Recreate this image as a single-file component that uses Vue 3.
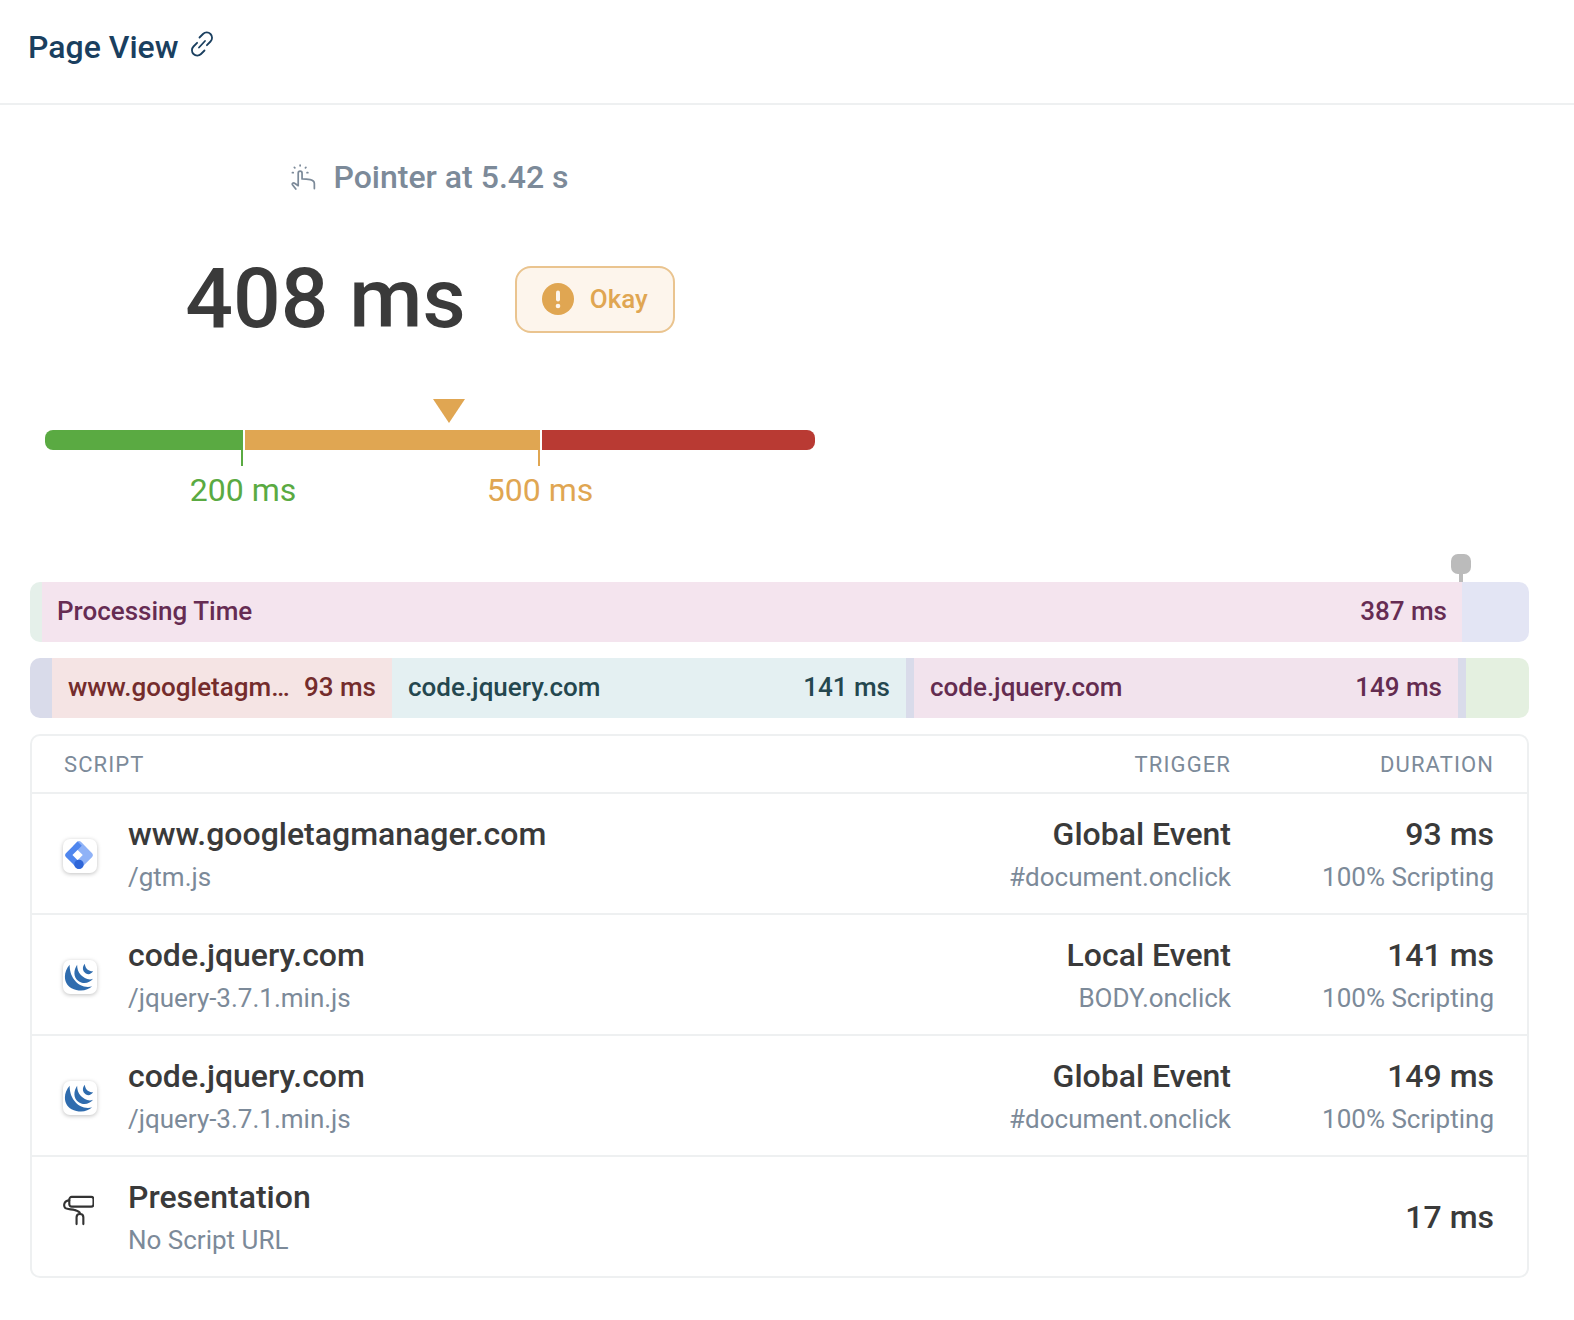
<script setup>
const topSegs = [
  { w: 12, bg: '#e5f0ea' },
  { w: 1420, bg: '#f4e4ee', label: 'Processing Time', value: '387 ms', color: '#662c53' },
  { w: 67, bg: '#e3e5f4' }
]
const subSegs = [
  { w: 22, bg: '#d9dbea' },
  { w: 340, bg: '#f5e4e4', label: 'www.googletagmanager.com', value: '93 ms', color: '#742c2c' },
  { w: 514, bg: '#e4f0f2', label: 'code.jquery.com', value: '141 ms', color: '#24474f' },
  { w: 8, bg: '#d9dbea' },
  { w: 544, bg: '#f2e3ed', label: 'code.jquery.com', value: '149 ms', color: '#642c50' },
  { w: 8, bg: '#d9dbea' },
  { w: 63, bg: '#e4f0e0' }
]
const rows = [
  { icon: 'gtm', name: 'www.googletagmanager.com', path: '/gtm.js', trigger: 'Global Event', source: '#document.onclick', time: '93 ms', note: '100% Scripting' },
  { icon: 'jq', name: 'code.jquery.com', path: '/jquery-3.7.1.min.js', trigger: 'Local Event', source: 'BODY.onclick', time: '141 ms', note: '100% Scripting' },
  { icon: 'jq', name: 'code.jquery.com', path: '/jquery-3.7.1.min.js', trigger: 'Global Event', source: '#document.onclick', time: '149 ms', note: '100% Scripting' },
  { icon: 'roller', name: 'Presentation', path: 'No Script URL', trigger: '', source: '', time: '17 ms', note: '' }
]
</script>

<template>
  <div class="page">
    <header class="head">
      <h1 class="title">Page View</h1>
      <svg class="link" viewBox="0 0 28 28" fill="none" stroke="#1a3f5f" stroke-width="1.8" stroke-linecap="round">
        <path d="M11.5 7.5 15 4a5.3 5.3 0 0 1 7.5 0 5.3 5.3 0 0 1 0 7.5l-3.6 3.7" />
        <path d="M16.5 20.5 13 24a5.3 5.3 0 0 1-7.500 0 5.300 5.300 0 0 1 0-7.500l3.600-3.700" />
        <path d="m11 17.500 6-6.500" />
      </svg>
    </header>

    <section class="summary">
      <div class="pointer">
        <svg class="hand" viewBox="0 0 26 28" fill="none" stroke="#7c8a99" stroke-width="1.800" stroke-linecap="round" stroke-linejoin="round">
          <path d="M5 26 1.500 21.500c-.6-1 .8-2.600 2.300-1.500L7.500 22.500V9.500c0-2.800 4-2.800 4 0V15.500c3 0 6 .3 8.500.8 3 .6 4.300 2 4.300 4.200v5" />
          <path d="M9.500 1.200v.6M3.500 3.500l.5.5M15.500 3.500l-.5.5M1.500 9h.8M16.700 9h.8" />
        </svg>
        <span>Pointer at 5.42 s</span>
      </div>

      <div class="score">
        <span class="big">408 ms</span>
        <span class="badge">
          <svg class="warn" viewBox="0 0 32 32">
            <circle cx="16" cy="16" r="16" fill="#e0a652" />
            <rect x="14" y="7.500" width="4" height="11" rx="2" fill="#fdf5ec" />
            <circle cx="16" cy="23" r="2.300" fill="#fdf5ec" />
          </svg>
          Okay
        </span>
      </div>

      <div class="meter">
        <i class="marker"></i>
        <div class="track">
          <b class="good"></b>
          <b class="okay"></b>
          <b class="poor"></b>
        </div>
        <div class="scale">
          <div class="stop stop-good"><u></u><span>200 ms</span></div>
          <div class="stop stop-okay"><u></u><span>500 ms</span></div>
        </div>
      </div>
    </section>

    <section class="timeline">
      <div class="pin"></div>
      <div class="bar">
        <div v-for="(s, i) in topSegs" :key="i" class="seg" :style="{ width: s.w + 'px', background: s.bg, color: s.color }">
          <template v-if="s.label">
            <span class="seg-label top-label">{{ s.label }}</span>
            <span class="seg-value top-value">{{ s.value }}</span>
          </template>
        </div>
      </div>
      <div class="bar">
        <div v-for="(s, i) in subSegs" :key="i" class="seg sub" :style="{ width: s.w + 'px', background: s.bg, color: s.color }">
          <template v-if="s.label">
            <span class="seg-label">{{ s.label }}</span>
            <span class="seg-value">{{ s.value }}</span>
          </template>
        </div>
      </div>
    </section>

    <section class="table">
      <div class="thead">
        <span class="col-script">SCRIPT</span>
        <span class="col-trigger">TRIGGER</span>
        <span class="col-time">DURATION</span>
      </div>
      <div v-for="(r, i) in rows" :key="i" class="row">
        <div class="cell-icon">
          <div v-if="r.icon !== 'roller'" class="tile">
            <svg v-if="r.icon === 'gtm'" viewBox="0 0 32 32">
              <path d="M18 1.800 30 14c1.100 1.100 1.100 2.900 0 4L18 30.200c-1.100 1.100-2.900 1.100-4 0l-4-4 10-10.200-10-10 4-4.200c1.100-1.100 2.900-1.100 4 0Z" fill="#8fb2f7" />
              <path d="M14.500 1.500 2 14c-1.100 1.100-1.100 2.900 0 4l12.500 12.500 4.500-4.500-10-10 10-10Z" fill="#4f86ee" />
              <circle cx="16" cy="26" r="5" fill="#2f66d8" />
            </svg>
            <svg v-else viewBox="0 0 32 32" fill="#2f6cae">
              <path d="M6 4C-1 12-1 24 8 29c8 4 17 3 22-2-7 2-15-1-19-7C7 15 6 9 6 4Z" />
              <path d="M14 4c-4 6-4 13 1 17 5 4 12 3 16-2-5 2-10-1-13-4-3-3-4-7-4-11Z" />
              <path d="M22 3c-3 4-2 8 1 10 3 2 6 1 8-2-3 0-5.500-1-7-3-1-1.500-1.500-3-2-5Z" />
            </svg>
          </div>
          <svg v-else class="roller" viewBox="0 0 32 32" fill="none" stroke="#333" stroke-width="2.200" stroke-linecap="round" stroke-linejoin="round">
            <rect x="6.500" y="2" width="25" height="10" rx="2.500" />
            <path d="M6.500 5.500C1 5.500 .5 11 2 13c1.500 2 7 1.500 10 2.500 3.500 1 5.500 1.500 5.500 3.500" />
            <path d="M14 30v-7c0-4.500 7-4.500 7 0v7" />
          </svg>
        </div>
        <div class="cell col-script">
          <div class="main">{{ r.name }}</div>
          <div class="subline">{{ r.path }}</div>
        </div>
        <div class="cell col-trigger">
          <div class="main">{{ r.trigger }}</div>
          <div class="subline">{{ r.source }}</div>
        </div>
        <div class="cell col-time">
          <div class="main">{{ r.time }}</div>
          <div v-if="r.note" class="subline">{{ r.note }}</div>
        </div>
      </div>
    </section>
  </div>
</template>

<style>
html, body { margin: 0; background: #fff; }
</style>

<style scoped>
.page {
  width: 1574px;
  height: 1320px;
  box-sizing: border-box;
  font-family: Roboto, "Liberation Sans", sans-serif;
  color: #3a3a3a;
  overflow: hidden;
}
.head {
  height: 103px;
  border-bottom: 2px solid #eef0f1;
  padding-left: 28px;
  display: flex;
  align-items: flex-start;
  gap: 10px;
}
.title {
  margin: 27px 0 0;
  font-size: 32px;
  line-height: 40px;
  font-weight: 500;
  color: #1a3f5f;
}
.link { width: 28px; height: 28px; margin-top: 30px; }
.summary {
  width: 770px;
  margin-left: 45px;
  display: flex;
  flex-direction: column;
  align-items: center;
}
.pointer {
  margin-top: 52px;
  height: 40px;
  display: flex;
  align-items: center;
  gap: 17px;
  font-size: 32px;
  font-weight: 500;
  color: #7c8a99;
}
.hand { width: 25px; height: 27px; }
.score {
  margin-top: 52px;
  display: flex;
  align-items: center;
  gap: 49px;
  height: 100px;
}
.big {
  font-size: 84px;
  font-weight: 500;
  color: #3a3a3a;
  line-height: 100px;
}
.badge {
  box-sizing: border-box;
  width: 160px;
  height: 67px;
  border: 2px solid #eac48f;
  border-radius: 16px;
  background: #fdf5ec;
  color: #e0a652;
  display: flex;
  align-items: center;
  justify-content: center;
  gap: 16px;
  font-size: 26px;
  font-weight: 500;
}
.warn { width: 32px; height: 32px; }
.meter {
  position: relative;
  width: 770px;
  margin-top: 47px;
  padding-top: 34px;
}
.marker {
  position: absolute;
  left: 388px;
  top: 3px;
  width: 0;
  height: 0;
  border-left: 16px solid transparent;
  border-right: 16px solid transparent;
  border-top: 24px solid #e0a652;
}
.track { display: flex; height: 20px; gap: 2px; }
.track b { display: block; height: 20px; }
.good { width: 198px; background: #5aaa42; border-radius: 8px 0 0 8px; }
.okay { width: 295px; background: #e0a652; }
.poor { width: 273px; background: #b93a33; border-radius: 0 8px 8px 0; }
.scale { position: relative; height: 60px; }
.stop {
  position: absolute;
  top: 0;
  width: 120px;
  display: flex;
  flex-direction: column;
  align-items: center;
  font-size: 32px;
}
.stop u { display: block; width: 2px; height: 16px; margin-right: 2px; background: currentColor; }
.stop span { line-height: 40px; margin-top: 4px; }
.stop-good { left: 138px; color: #5aaa42; }
.stop-okay { left: 435px; color: #e0a652; }
.timeline {
  position: relative;
  margin: 72px 45px 0 30px;
  display: flex;
  flex-direction: column;
  gap: 16px;
}
.pin {
  position: absolute;
  left: 1421px;
  top: -28px;
  width: 20px;
  height: 20px;
  border-radius: 7px;
  background: #bbb;
}
.pin::after {
  content: "";
  position: absolute;
  left: 8px;
  top: 19px;
  width: 4px;
  height: 9px;
  background: #bbb;
}
.bar {
  display: flex;
  height: 60px;
  border-radius: 10px;
  overflow: hidden;
  font-size: 26px;
  font-weight: 500;
}
.seg {
  flex: none;
  box-sizing: border-box;
  display: flex;
  align-items: center;
  justify-content: space-between;
  gap: 8px;
  min-width: 0;
  padding-bottom: 2px;
  white-space: nowrap;
}
.sub { padding: 0 16px 2px; }
.sub:empty { padding: 0; }
.seg-label { overflow: hidden; text-overflow: ellipsis; min-width: 0; }
.seg-value { flex: none; }
.top-label { margin-left: 15px; }
.top-value { margin-right: 15px; }
.table {
  margin: 16px 45px 0 30px;
  border: 2px solid #eef0f1;
  border-radius: 10px;
}
.thead {
  display: grid;
  grid-template-columns: 1fr 330px 263px;
  align-items: center;
  height: 56px;
  padding: 0 33px 0 32px;
  font-size: 22px;
  letter-spacing: 1.1px;
  color: #7c8a99;
}
.col-trigger, .col-time { text-align: right; }
.row {
  display: grid;
  grid-template-columns: 64px 1fr 330px 263px;
  align-items: center;
  height: 121px;
  box-sizing: border-box;
  border-top: 2px solid #eef0f1;
  padding: 0 33px 0 32px;
}
.cell-icon { display: flex; margin-left: -1px; }
.tile {
  width: 32px;
  height: 32px;
  padding: 1px;
  margin-top: 5px;
  border-radius: 7px;
  background: #fff;
  box-shadow: 0 1px 4px rgba(0, 0, 0, 0.25);
  display: flex;
}
.tile svg { width: 30px; height: 30px; }
.roller { width: 31px; height: 31px; margin-bottom: 12px; }
.row .cell { min-width: 0; }
.main {
  font-size: 32px;
  line-height: 40px;
  font-weight: 500;
  color: #3a3a3a;
}
.subline {
  margin-top: 7px;
  font-size: 26px;
  line-height: 32px;
  color: #7c8a99;
}
</style>
